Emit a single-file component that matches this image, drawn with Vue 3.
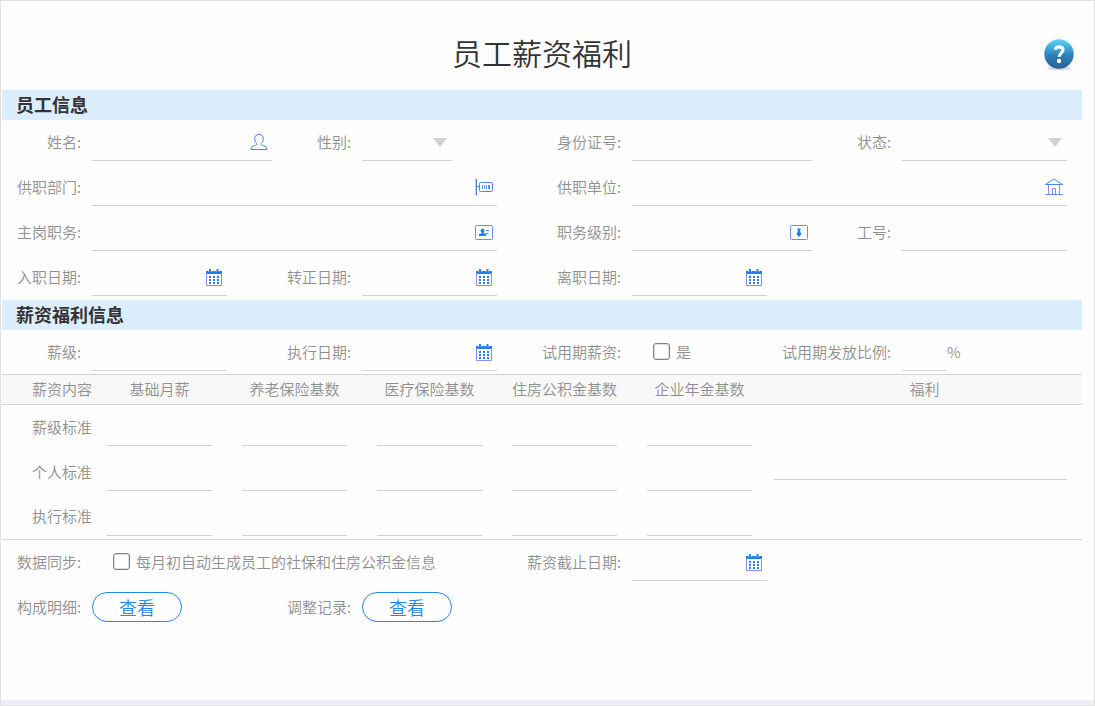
<template>
  <div class="page">
    <svg class="sprite" aria-hidden="true">
      <symbol id="i-user" viewBox="0 0 18 18">
        <path
          d="M6.6 10.6C5.2 9 4.7 7.600 4.700 5.500C4.700 3 6.300 1.500 9 1.500S13.300 3 13.300 5.500C13.300 7.600 12.800 9 11.400 10.600C11.300 12 12 12.200 13.800 12.800C15.800 13.400 16.800 14 17 16.500H1C1.200 14 2.200 13.400 4.200 12.800C6 12.200 6.700 12 6.600 10.600Z"
          fill="none"
          stroke="#4a80ee"
        />
      </symbol>
      <symbol id="i-dept" viewBox="0 0 18 18">
        <path d="M1.500 1V17" stroke="#5b78f0" fill="none" />
        <path d="M0.500 1V17" stroke="#f0b6ee" fill="none" />
        <path d="M2 8.500H4.500" stroke="#2f86f0" fill="none" />
        <rect x="4.500" y="4.500" width="13" height="9" rx="1" fill="none" stroke="#5f7ff0" />
        <path d="M7.500 7V11M9.500 7V11M11.500 7V11M13.500 7V11" stroke="#5a9cf0" fill="none" />
        <path d="M14.500 7V11" stroke="#3a8af0" fill="none" />
      </symbol>
      <symbol id="i-org" viewBox="0 0 18 18">
        <path d="M0.500 6.500L9 1L17.500 6.500Z" fill="none" stroke="#4a86f0" />
        <path d="M3.500 7V16M14.500 7V16" fill="none" stroke="#8a8cf2" />
        <path d="M7.500 16V10.500H10.500V16" fill="none" stroke="#7c86f2" />
        <path d="M0.500 16.500H17.500" fill="none" stroke="#6b86f2" />
      </symbol>
      <symbol id="i-post" viewBox="0 0 18 18">
        <rect x="0.500" y="2.500" width="17" height="14" rx="1" fill="none" stroke="#6f8cf2" />
        <circle cx="7.500" cy="7.800" r="2" fill="#1f7df0" />
        <path d="M6.500 9H8.500V10.500H11V13H4V11L6.500 10.500Z" fill="#1f7df0" />
        <path d="M11 7.500H14M11 10.500H13.500" stroke="#4a94f0" fill="none" />
      </symbol>
      <symbol id="i-level" viewBox="0 0 18 18">
        <rect x="0.500" y="2.500" width="17" height="14" rx="1" fill="none" stroke="#6f8cf2" />
        <path d="M7 5.500H11L10 7.500L11.300 11.500L9 14L6.700 11.500L8 7.500Z" fill="#1f7df0" />
      </symbol>
      <symbol id="i-date" viewBox="0 0 18 18">
        <path d="M1 3H17V6H1Z" fill="#1f80f0" />
        <path d="M5 0.500V3.500M12.500 0.500V3.500" stroke="#fff" stroke-width="4" />
        <path d="M5 1V4.500M12.500 1V4.500" stroke="#2a80f0" stroke-width="2" />
        <path d="M1.500 5V17.500H16.500V5" fill="none" stroke="#8a8cf2" />
        <path
          d="M4 8H6V10H4ZM8 8H10V10H8ZM12 8H14V10H12ZM4 11H6V13H4ZM8 11H10V13H8ZM12 11H14V13H12ZM4 14H6V16H4ZM8 14H10V16H8ZM12 14H14V16H12Z"
          fill="#2a7cf0"
        />
      </symbol>
    </svg>

    <form class="sheet" @submit.prevent>
      <header class="head">
        <h1>员工薪资福利</h1>
        <button type="button" class="help" aria-label="帮助">
          <svg viewBox="0 0 32 34" width="32" height="34">
            <defs>
              <linearGradient id="ball" x1="0" y1="0" x2="0" y2="1">
                <stop offset="0" stop-color="#62d6f4" />
                <stop offset="0.200" stop-color="#45b9e4" />
                <stop offset="0.550" stop-color="#2f7fb8" />
                <stop offset="1" stop-color="#2a5f98" />
              </linearGradient>
            </defs>
            <ellipse cx="16" cy="30.500" rx="12" ry="1.800" fill="#d8d8d8" />
            <circle cx="16" cy="16" r="14.700" fill="url(#ball)" />
            <path
              d="M12.200 11.800C12.600 9.400 14.200 8.800 16 8.800C18.400 8.800 20 10 20 12C20 15 16.200 15.200 16.200 18.800"
              fill="none"
              stroke="#fff"
              stroke-width="3.200"
            />
            <circle cx="16" cy="23" r="2.200" fill="#fff" />
          </svg>
        </button>
      </header>

      <template v-for="section in sections" :key="section.title">
        <h2>{{ section.title }}</h2>
        <div v-for="(row, i) in section.rows" :key="i" class="row">
          <div v-for="f in row" :key="f.id" class="field" :class="['at-' + f.at, 'w-' + f.w]">
            <label :for="f.id" class="label">{{ f.label }}:</label>
            <div v-if="f.type === 'check'" class="check">
              <input :id="f.id" v-model="form[f.id]" type="checkbox" />
              <label :for="f.id">{{ f.text }}</label>
            </div>
            <div v-else-if="f.type === 'select'" class="control select">
              <select :id="f.id" v-model="form[f.id]">
                <option value=""></option>
                <option v-for="o in f.options" :key="o">{{ o }}</option>
              </select>
            </div>
            <div v-else class="control">
              <input :id="f.id" v-model="form[f.id]" type="text" />
              <button v-if="f.icon" type="button" class="pick" :aria-label="f.label">
                <svg width="18" height="18"><use :href="'#i-' + f.icon" /></svg>
              </button>
            </div>
            <span v-if="f.unit" class="unit">{{ f.unit }}</span>
          </div>
        </div>
      </template>

      <table>
        <thead>
          <tr>
            <th class="name">薪资内容</th>
            <th v-for="c in columns" :key="c">{{ c }}</th>
            <th class="welfare">福利</th>
          </tr>
        </thead>
        <tbody>
          <tr v-for="(s, i) in standards" :key="s">
            <th class="name" scope="row">{{ s }}</th>
            <td v-for="c in columns" :key="c">
              <input v-model="form[s + c]" type="text" :aria-label="s + c" />
            </td>
            <td v-if="i === 0" class="welfare" rowspan="3">
              <textarea v-model="form.welfare" aria-label="福利"></textarea>
            </td>
          </tr>
        </tbody>
      </table>

      <div class="row">
        <div class="field at-1 w-8">
          <label for="sync" class="label">数据同步:</label>
          <div class="check">
            <input id="sync" v-model="form.sync" type="checkbox" />
            <label for="sync">每月初自动生成员工的社保和住房公积金信息</label>
          </div>
        </div>
        <div class="field at-3 w-3">
          <label for="endDate" class="label">薪资截止日期:</label>
          <div class="control">
            <input id="endDate" v-model="form.endDate" type="text" />
            <button type="button" class="pick" aria-label="薪资截止日期">
              <svg width="18" height="18"><use href="#i-date" /></svg>
            </button>
          </div>
        </div>
      </div>
      <div class="row">
        <div class="field at-1 w-2">
          <span class="label">构成明细:</span>
          <button type="button" class="view">查看</button>
        </div>
        <div class="field at-2 w-2">
          <span class="label">调整记录:</span>
          <button type="button" class="view">查看</button>
        </div>
      </div>
    </form>
    <div class="foot"></div>
  </div>
</template>

<script setup>
import { reactive } from "vue";

const form = reactive({ sex: "", status: "", sync: false, trial: false });

// at: which quarter of the sheet the field starts in, w: width of the control in 1/24
const sections = [
  {
    title: "员工信息",
    rows: [
      [
        { id: "name", label: "姓名", at: 1, w: 4, icon: "user" },
        { id: "sex", label: "性别", at: 2, w: 2, type: "select", options: ["男", "女"] },
        { id: "idCard", label: "身份证号", at: 3, w: 4 },
        { id: "status", label: "状态", at: 4, w: "end", type: "select", options: ["在职", "离职"] },
      ],
      [
        { id: "dept", label: "供职部门", at: 1, w: 9, icon: "dept" },
        { id: "org", label: "供职单位", at: 3, w: "end", icon: "org" },
      ],
      [
        { id: "post", label: "主岗职务", at: 1, w: 9, icon: "post" },
        { id: "level", label: "职务级别", at: 3, w: 4, icon: "level" },
        { id: "jobNo", label: "工号", at: 4, w: "end" },
      ],
      [
        { id: "entryDate", label: "入职日期", at: 1, w: 3, icon: "date" },
        { id: "regularDate", label: "转正日期", at: 2, w: 3, icon: "date" },
        { id: "leaveDate", label: "离职日期", at: 3, w: 3, icon: "date" },
      ],
    ],
  },
  {
    title: "薪资福利信息",
    rows: [
      [
        { id: "grade", label: "薪级", at: 1, w: 3 },
        { id: "runDate", label: "执行日期", at: 2, w: 3, icon: "date" },
        { id: "trial", label: "试用期薪资", at: 3, w: 2, type: "check", text: "是" },
        { id: "ratio", label: "试用期发放比例", at: 4, w: 1, unit: "%" },
      ],
    ],
  },
];

const columns = ["基础月薪", "养老保险基数", "医疗保险基数", "住房公积金基数", "企业年金基数"];
const standards = ["薪级标准", "个人标准", "执行标准"];
</script>

<style>
body {
  margin: 0;
  background: #fff;
}
</style>

<style scoped>
.page {
  box-sizing: border-box;
  min-height: 100vh;
  display: flex;
  flex-direction: column;
  border: 1px solid #e0e0e0;
  background: #fefefe;
  color: #909090;
  font-family: "Microsoft YaHei Light", "Noto Sans CJK SC", sans-serif;
  font-size: 15px;
  font-weight: 350;
  line-height: 20px;
}
.sprite {
  display: none;
}
.sheet {
  flex: 1;
  margin: 0 12px 0 1px;
}
.foot {
  height: 5px;
  background: #eeeef4;
}
.head {
  position: relative;
  display: flex;
  align-items: center;
  justify-content: center;
  height: 71px;
  padding: 15px 0 3px;
}
h1 {
  margin: 0;
  color: #333;
  font-size: 30px;
  font-weight: 350;
  line-height: 40px;
}
.help {
  position: absolute;
  top: 37px;
  right: 7px;
  width: 32px;
  height: 34px;
}
button {
  padding: 0;
  border: 0;
  background: none;
  font: inherit;
  cursor: pointer;
}
svg {
  display: block;
}
h2 {
  margin: 0;
  padding: 0 0 2px 14px;
  background: #dcedfe;
  color: #333;
  font-size: 18px;
  font-weight: 700;
  line-height: 28px;
}
.row {
  display: grid;
  grid-template-columns: repeat(24, minmax(0, 1fr));
  height: 45px;
}
.field {
  grid-row: 1;
  display: grid;
  grid-template-columns: subgrid;
  align-items: center;
  padding-bottom: 2px;
}
.at-1 {
  grid-column-start: 1;
}
.at-2 {
  grid-column-start: 7;
}
.at-3 {
  grid-column-start: 13;
}
.at-4 {
  grid-column-start: 19;
}
.w-1,
.w-2 {
  grid-column-end: span 4;
}
.w-3 {
  grid-column-end: span 5;
}
.w-4 {
  grid-column-end: span 6;
}
.w-8 {
  grid-column-end: span 10;
}
.w-9 {
  grid-column-end: span 11;
}
.w-end {
  grid-column-end: -1;
  padding-right: 15px;
}
.label {
  grid-column: 1 / 3;
  display: flex;
  justify-content: flex-end;
  padding-right: 11px;
  white-space: nowrap;
}
.control,
.check {
  grid-column: 3 / -1;
}
.w-1 .control {
  grid-column: 3 / 4;
}
.control {
  position: relative;
  display: flex;
  align-items: center;
  align-self: end;
  height: 35px;
  margin-bottom: 2px;
  border-bottom: 1px solid #d2d2d2;
}
input[type="text"],
select,
textarea {
  box-sizing: border-box;
  width: 100%;
  min-width: 0;
  padding: 0 5px;
  border: 0;
  outline: none;
  background: none;
  color: #333;
  font: inherit;
}
.control input,
.control select {
  flex: 1;
  height: 100%;
}
select {
  appearance: none;
}
.select::after {
  content: "";
  position: absolute;
  right: 5px;
  top: 13px;
  border: 7px solid transparent;
  border-top: 9px solid #d2d2d2;
  border-bottom: 0;
  pointer-events: none;
}
.pick {
  flex: none;
  margin: 0 4px 2px 0;
}
.unit {
  grid-column: 4 / 5;
}
.check {
  display: flex;
  align-items: center;
  gap: 6px;
  padding-left: 21px;
  white-space: nowrap;
}
.check input {
  appearance: none;
  box-sizing: border-box;
  flex: none;
  width: 17px;
  height: 17px;
  margin: 0;
  border: 1px solid #80808e;
  border-radius: 3px;
  background: #fff;
  box-shadow: inset 0 0 0 1px #dcdce2;
}
.check input:checked {
  background: #1f80f0;
}
table {
  width: 100%;
  margin-top: -1px;
  border-collapse: separate;
  border-spacing: 0;
  table-layout: fixed;
  border-bottom: 1px solid #d4d4d4;
}
th,
td {
  box-sizing: border-box;
  padding: 0;
  font-weight: 350;
  white-space: nowrap;
}
th {
  width: 12.5%;
  padding-bottom: 2px;
}
thead th {
  height: 31px;
  border-top: 1px solid #d4d4d4;
  border-bottom: 1px solid #d4d4d4;
  background: #f8f8f8;
}
tbody tr {
  height: 45px;
}
tbody tr:last-child {
  height: 44px;
}
.name {
  width: 8.3333%;
  text-align: right;
}
.welfare {
  width: auto;
}
td {
  padding: 5px 15px 0;
  vertical-align: top;
}
td input[type="text"] {
  display: block;
  height: 36px;
  border-bottom: 1px solid #d2d2d2;
}
td.welfare {
  padding: 0 15px 20px 7px;
  vertical-align: middle;
}
textarea {
  display: block;
  height: 36px;
  border-bottom: 1px solid #d2d2d2;
  resize: none;
}
.view {
  box-sizing: border-box;
  grid-column: 3 / -1;
  height: 30px;
  border: 1px solid #1f86f2;
  border-radius: 15px;
  color: #1f86f2;
  font-size: 18px;
  line-height: 28px;
}
</style>
